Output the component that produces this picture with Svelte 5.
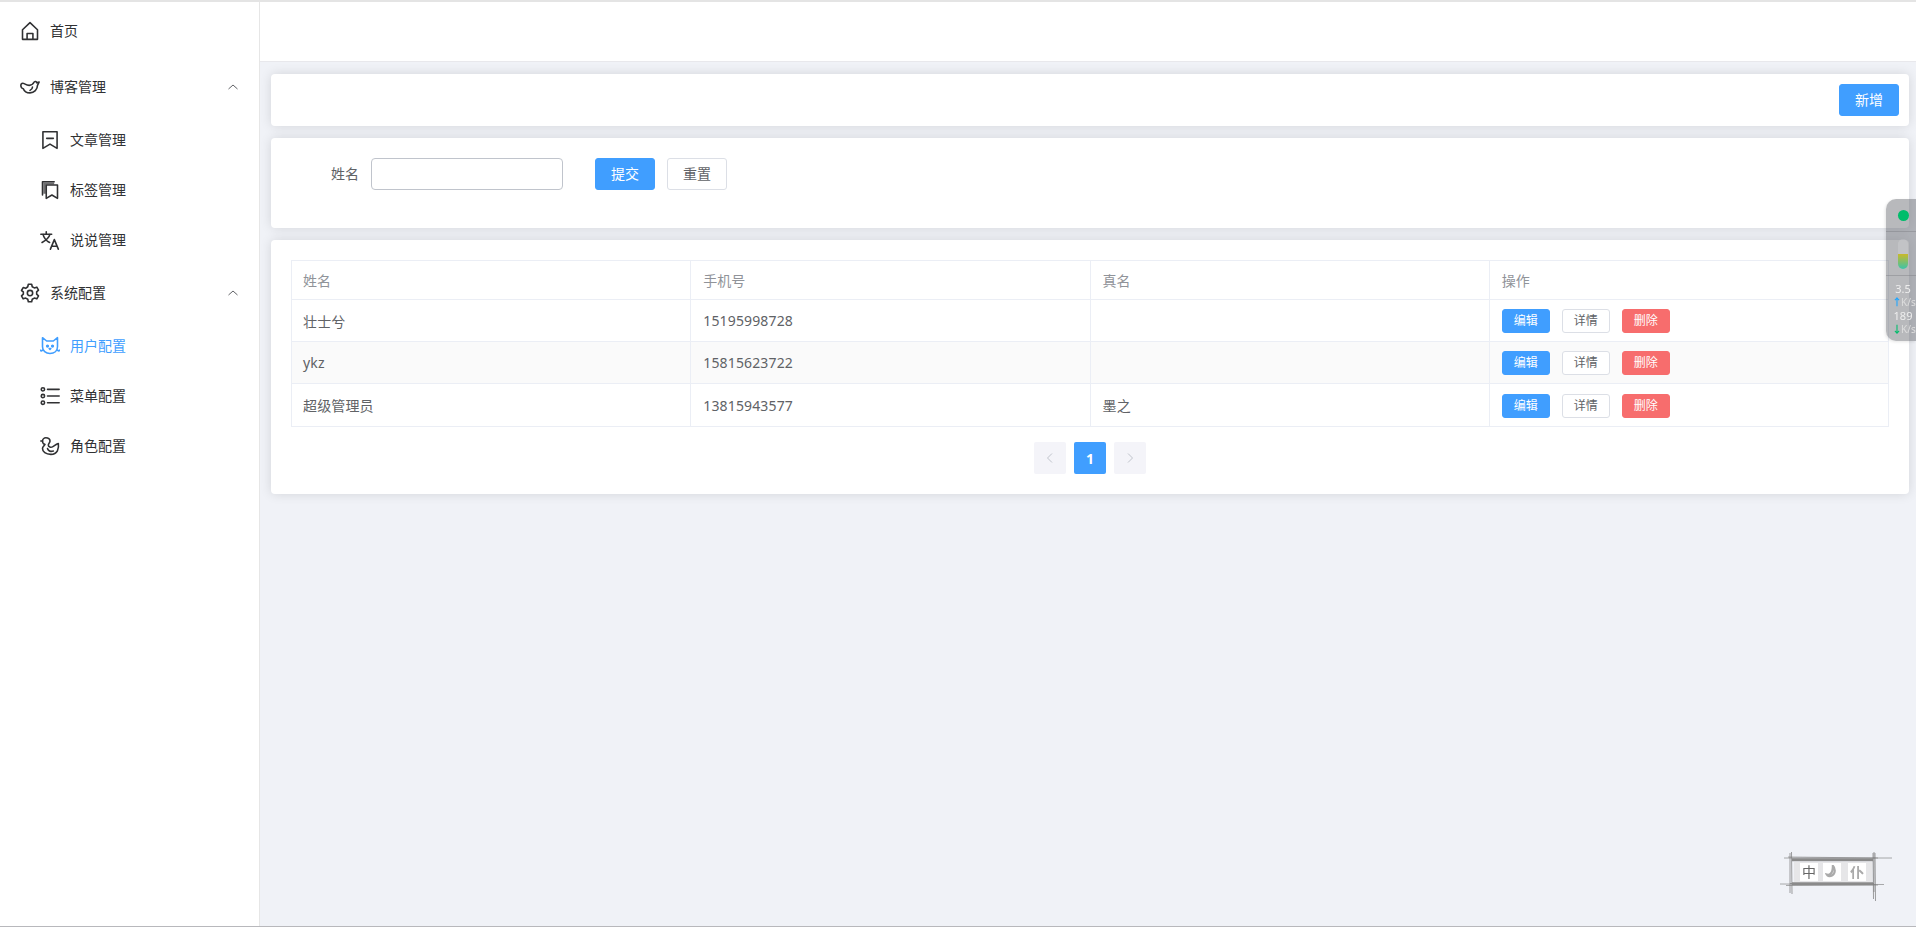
<script>
  const blog = [
    { label: '文章管理', icon: 'bookmark' },
    { label: '标签管理', icon: 'bookmarks' },
    { label: '说说管理', icon: 'translate' },
  ];
  const system = [
    { label: '用户配置', icon: 'cat', active: true },
    { label: '菜单配置', icon: 'list' },
    { label: '角色配置', icon: 'duck' },
  ];
  const users = [
    { name: '壮士兮', phone: '15195998728', real: '' },
    { name: 'ykz', phone: '15815623722', real: '' },
    { name: '超级管理员', phone: '13815943577', real: '墨之' },
  ];
</script>

{#snippet icon(name)}
  <svg class="icon" viewBox="0 0 24 24" fill="none" stroke="currentColor" stroke-width="1.900" stroke-linejoin="round" stroke-linecap="round">
    {#if name === 'home'}
      <path d="M3 10.500 12 2l9 8.500V22H3zM8.500 22v-7h7v7" />
    {:else if name === 'bird'}
      <path d="M1 10c0-2 2-3 4-2s3 2 6 2c3 0 5-2 6-4 1-1 3-1 3 1l3-1-2 4c0 5-4 9-9 9-4 0-7-2-8-5-2 0-3-2-3-4z" />
      <path d="M15 12c0 2-1 3-3 4" />
    {:else if name === 'gear'}
      <path d="M10 1.500h4l.7 3 2.500 1.400 3-.9 2 3.500-2.200 2.100v2.800l2.200 2.100-2 3.500-3-.9-2.500 1.400-.7 3h-4l-.7-3-2.500-1.400-3 .9-2-3.500 2.200-2.100v-2.800L1.800 9l2-3.500 3 .9L9.300 4.500z" />
      <circle cx="12" cy="12" r="3.200" />
    {:else if name === 'bookmark'}
      <path d="M3.500 2h17v20l-8.500-5-8.500 5zM8 10h8" />
    {:else if name === 'bookmarks'}
      <path d="M7.500 6h13.500v16l-6.700-4-6.800 4zM3 18V2h14" />
      <path d="M4 3h13v2.500H7v11H4z" fill="currentColor" stroke="none" opacity=".7" />
    {:else if name === 'translate'}
      <path d="M1 5h13M7.500 2v3M3.500 5c1 4 4 8 8 10M12 5c-1 4-4 7-9.500 10M12.500 23l4.700-11.500L22 23M14.200 19.500h6" />
    {:else if name === 'cat'}
      <path d="M3 2l5 4h8l5-4v11c0 5-4 8-9 8s-9-3-9-8zM0 17c1 1 2 1 3 0M21 17c1 1 2 1 3 0" />
      <circle cx="9" cy="12" r="1" fill="currentColor" />
      <circle cx="15" cy="12" r="1" fill="currentColor" />
      <path d="M11 15h2l-1 1z" />
    {:else if name === 'list'}
      <circle cx="3.500" cy="4" r="2" />
      <circle cx="3.500" cy="12" r="2" />
      <circle cx="3.500" cy="20" r="2" />
      <path d="M9 4h14M9 12h14M9 20h14" />
    {:else if name === 'duck'}
      <path d="M3 6c0-2 2-4 4-4 3 0 5 2 5 4 0 2-2 3-2 5s3 3 5 2c2-1 4-3 7-4 1 6-1 13-9 13-6 0-10-3-10-7 0-2 2-3 3-5-1 0-3-1-3-4z" />
      <path d="M3 6H1M9 15c1 3 4 4 7 3" />
    {/if}
  </svg>
{/snippet}

{#snippet chevron()}
  <svg class="chevron" viewBox="0 0 10 6" fill="none" stroke="currentColor" stroke-width="1"><path d="M.5 5 5 1l4.500 4" /></svg>
{/snippet}

<div class="page">
  <aside class="sidebar">
    <a class="item top">{@render icon('home')}<span>首页</span></a>
    <div class="item title">{@render icon('bird')}<span>博客管理</span>{@render chevron()}</div>
    <div class="sub">
      {#each blog as m}
        <a class="item">{@render icon(m.icon)}<span>{m.label}</span></a>
      {/each}
    </div>
    <div class="item title">{@render icon('gear')}<span>系统配置</span>{@render chevron()}</div>
    <div class="sub">
      {#each system as m}
        <a class="item" class:active={m.active}>{@render icon(m.icon)}<span>{m.label}</span></a>
      {/each}
    </div>
  </aside>

  <div class="right">
    <header class="header"></header>
    <main class="main">
      <section class="card toolbar">
        <button class="btn primary">新增</button>
      </section>

      <section class="card search">
        <label for="name">姓名</label>
        <input id="name" type="text" />
        <button class="btn primary first">提交</button>
        <button class="btn">重置</button>
      </section>

      <section class="card list">
        <table>
          <thead>
            <tr><th>姓名</th><th>手机号</th><th>真名</th><th>操作</th></tr>
          </thead>
          <tbody>
            {#each users as u}
              <tr>
                <td>{u.name}</td>
                <td>{u.phone}</td>
                <td>{u.real}</td>
                <td>
                  <div class="ops">
                    <button class="btn small primary">编辑</button>
                    <button class="btn small">详情</button>
                    <button class="btn small danger">删除</button>
                  </div>
                </td>
              </tr>
            {/each}
          </tbody>
        </table>
        <nav class="pager">
          <span class="pg"><svg viewBox="0 0 10 12" fill="none" stroke="currentColor"><path d="M7 1.500 2.500 6 7 10.500" /></svg></span>
          <span class="pg on">1</span>
          <span class="pg"><svg viewBox="0 0 10 12" fill="none" stroke="currentColor"><path d="M3 1.500 7.500 6 3 10.500" /></svg></span>
        </nav>
      </section>
    </main>
  </div>
</div>

<!-- network speed widget -->
<div class="speed">
  <div class="sec dot-sec"><i class="dot"></i></div>
  <div class="sec bar-sec"><div class="bar"><div class="fill"></div></div></div>
  <div class="rates">
    <b>3.5</b>
    <small><em class="up">↑</em>K/s</small>
    <b>189</b>
    <small><em class="down">↓</em>K/s</small>
  </div>
</div>

<!-- input method status skin -->
<div class="ime">
  <svg viewBox="0 0 112 52" fill="none" stroke="#777" stroke-width="1">
    <path d="M4 8h108M8 7l90 1M0 34l104 .5M6 35.500l92-.5M10 33.500h84" opacity=".6" />
    <path d="M10 3v40M11.500 2l.5 42M93 3l.5 46M95 3l.5 48M94 2v40" opacity=".7" />
    <path d="M12 9h81M12 10.500h81M12 33h81M12 34.500h81" stroke="#8a8a8a" stroke-width="1.500" />
  </svg>
  <div class="cells">
    <span>中</span>
    <span><svg viewBox="0 0 16 16" fill="none" stroke="#aaa" stroke-width="2.500"><path d="M9 1c3 3 3 9-1 11-2 1-5 1-6-1 3 1 7-1 7-10z" /></svg></span>
    <span class="grey">仆</span>
  </div>
</div>

<style>
  :global(body) {
    margin: 0;
    background: #f0f2f7;
    font-family: 'Noto Sans', 'Noto Sans CJK SC', sans-serif;
    font-size: 14px;
    overflow: hidden;
  }

  .page {
    display: flex;
    height: 924px;
    border-top: 2px solid #e4e4e4;
    border-bottom: 1px solid #b8b8bc;
    background: #f0f2f7;
  }

  .sidebar {
    width: 259px;
    flex-shrink: 0;
    background: #fff;
    border-right: 1px solid #e6e6e6;
    padding-top: 4px;
    color: #303133;
  }

  .item {
    display: flex;
    align-items: center;
    height: 50px;
    padding-left: 20px;
    line-height: 1;
  }
  .item.top {
    margin-bottom: 6px;
  }
  .item span {
    margin-left: 10px;
  }
  .sub {
    padding: 3px 0;
  }
  .sub .item {
    padding-left: 40px;
  }
  .item.active {
    color: #409eff;
  }

  .icon {
    width: 20px;
    height: 20px;
    flex-shrink: 0;
  }
  .chevron {
    width: 10px;
    height: 6px;
    margin-left: auto;
    margin-right: 21px;
    color: #606266;
  }

  .right {
    flex: 1;
    min-width: 0;
    display: flex;
    flex-direction: column;
  }

  .header {
    height: 60px;
    flex-shrink: 0;
    background: #fff;
    border-bottom: 1px solid #e8e8ec;
    box-sizing: border-box;
  }

  .main {
    padding: 12px 7px 0 11px;
    display: flex;
    flex-direction: column;
    gap: 12px;
  }

  .card {
    background: #fff;
    border-radius: 4px;
    box-shadow: 0 0 12px rgba(0, 0, 0, 0.12);
    box-sizing: border-box;
  }

  .toolbar {
    height: 52px;
    padding: 10px;
    display: flex;
    justify-content: flex-end;
  }

  .search {
    height: 90px;
    padding: 20px;
    display: flex;
    align-items: flex-start;
    color: #606266;
  }
  .search label {
    width: 68px;
    padding-right: 12px;
    text-align: right;
    line-height: 32px;
  }
  .search input {
    width: 192px;
    height: 32px;
    box-sizing: border-box;
    border: 1px solid #c0c4cc;
    border-radius: 4px;
    outline: none;
    margin-right: 32px;
  }
  .search .first {
    margin-right: 12px;
  }

  .btn {
    width: 60px;
    height: 32px;
    padding: 0;
    border: 1px solid #dcdfe6;
    border-radius: 3px;
    background: #fff;
    color: #606266;
    font: inherit;
    font-size: 14px;
    line-height: 1;
  }
  .btn.primary {
    background: #409eff;
    border-color: #409eff;
    color: #fff;
  }
  .btn.danger {
    background: #f76d6d;
    border-color: #f76d6d;
    color: #fff;
  }
  .btn.small {
    width: 48px;
    height: 24px;
    font-size: 12px;
    letter-spacing: 0;
  }

  .list {
    padding: 20px;
  }

  table {
    width: 100%;
    table-layout: fixed;
    border-collapse: collapse;
    color: #606266;
    border: 1px solid #ebeef5;
  }
  th,
  td {
    border: 1px solid #ebeef5;
    padding: 0 11px 0 12px;
    text-align: left;
    font-weight: 400;
  }
  th:first-child,
  td:first-child {
    padding-left: 11px;
  }
  th {
    height: 38px;
    color: #909399;
  }
  td {
    height: 41px;
    letter-spacing: 0.15px;
  }
  tbody tr:nth-child(2) {
    background: #fafafa;
  }
  tbody tr:last-child td {
    height: 42px;
  }
  .ops {
    display: flex;
    align-items: center;
    gap: 12px;
    padding-top: 1px;
  }

  .pager {
    display: flex;
    justify-content: center;
    gap: 8px;
    margin-top: 15px;
  }
  .pg {
    width: 32px;
    height: 32px;
    display: flex;
    align-items: center;
    justify-content: center;
    background: #f4f4f9;
    border-radius: 2px;
    color: #c0c4cc;
    font-weight: 700;
  }
  .pg svg {
    width: 10px;
    height: 12px;
  }
  .pg.on {
    background: #409eff;
    color: #fff;
  }

  .speed {
    position: fixed;
    top: 199px;
    right: 0;
    width: 30px;
    height: 142px;
    background: rgba(85, 87, 95, 0.42);
    border-radius: 10px 0 0 10px;
    color: #eee;
    font-size: 11px;
    box-shadow: -1px 1px 3px rgba(0, 0, 0, 0.1);
    overflow: hidden;
  }
  .sec {
    display: flex;
    justify-content: center;
    padding-left: 4px;
    border-bottom: 1px solid rgba(120, 120, 125, 0.4);
  }
  .dot-sec {
    height: 32px;
    align-items: center;
  }
  .dot {
    width: 11px;
    height: 11px;
    border-radius: 50%;
    background: #00bd6b;
  }
  .bar-sec {
    height: 43px;
    align-items: center;
  }
  .bar {
    width: 10px;
    height: 30px;
    border-radius: 5px;
    overflow: hidden;
    background: rgba(255, 255, 255, 0.15);
    display: flex;
    align-items: flex-end;
  }
  .fill {
    width: 100%;
    height: 15px;
    background: linear-gradient(#c9b92a, #3cc4aa);
  }
  .rates {
    display: flex;
    flex-direction: column;
    padding: 6px 0 0 6px;
  }
  .rates b {
    font-weight: 400;
    font-size: 11px;
    line-height: 14px;
    text-align: center;
    width: 22px;
  }
  .rates small {
    display: flex;
    font-size: 10px;
    line-height: 12px;
    margin-bottom: 1px;
    color: #ddd;
    white-space: nowrap;
  }
  .rates em {
    font-style: normal;
    font-weight: 700;
    font-size: 10px;
    width: 8px;
    margin-right: 1px;
  }
  .up {
    color: #1ea5ff;
  }
  .down {
    color: #00bd6b;
  }

  .ime {
    position: fixed;
    left: 1780px;
    top: 850px;
    width: 112px;
    height: 52px;
    filter: blur(0.3px);
  }
  .ime > svg {
    position: absolute;
    inset: 0;
    width: 112px;
    height: 52px;
  }
  .cells {
    position: absolute;
    left: 14px;
    top: 12px;
    display: flex;
    align-items: center;
    gap: 5px;
    padding-left: 6px;
    width: 72px;
    height: 20px;
    background: #e6e6e8;
    font-size: 14px;
    line-height: 18px;
    color: #666;
  }
  .cells span {
    width: 18px;
    height: 18px;
    text-align: center;
    background: #fff;
  }
  .cells span:nth-child(3) {
    margin-left: 2px;
  }
  .cells span svg {
    width: 14px;
    height: 14px;
    margin-top: 2px;
  }
  .cells .grey {
    color: #aaa;
    font-weight: 700;
  }
</style>
